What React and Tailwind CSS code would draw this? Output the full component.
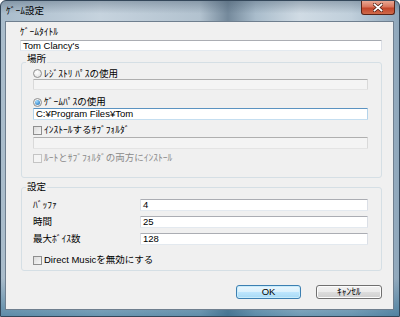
import React from 'react'

const font = "font-[family-name:'Liberation_Sans','Noto_Sans_CJK_JP',sans-serif]"

function TextBox({ value, w = 'w-full', h = 'h-[12px]', disabled, hot }) {
  const border = hot
    ? 'border-t-[#5b93c1] border-x-[#b4d3ea] border-b-[#c5def0]'
    : disabled
      ? 'border-t-[#afafaf] border-x-[#d9d9d9] border-b-[#e4e4e4]'
      : 'border-t-[#abadb3] border-x-[#dbdfe6] border-b-[#e3e9ef]'
  return (
    <div className={`${w} ${h} flex items-center border rounded-[1px] ${border} ${disabled ? 'bg-[#f4f4f4]' : 'bg-white'} pl-[2px] text-[9.5px] leading-none text-black`}>
      {value}
    </div>
  )
}

function Radio({ checked, label }) {
  return (
    <div className="flex items-center h-[12px] gap-[2px]">
      <div className="w-[9px] h-[9px] rounded-full border border-[#8f8f8f] bg-[radial-gradient(circle_at_40%_35%,#ffffff,#dcdcdc)] flex items-center justify-center">
        {checked && <div className="w-[5px] h-[5px] rounded-full bg-[radial-gradient(circle_at_35%_30%,#9fd9ff,#1a6fb8)]" />}
      </div>
      <span>{label}</span>
    </div>
  )
}

function Check({ label, disabled }) {
  return (
    <div className={`flex items-center h-[12px] gap-[2px] ${disabled ? 'text-[#8a8a8a]' : ''}`}>
      <div className={`w-[9px] h-[9px] border ${disabled ? 'border-[#c4c4c4] bg-[#f4f4f4]' : 'border-[#8f8f8f] bg-[linear-gradient(135deg,#dcdcdc,#f6f6f6)]'}`} />
      <span>{label}</span>
    </div>
  )
}

function Group({ title, top, className, children }) {
  return (
    <div className={`relative ml-[1px] border border-[#d5dfe5] rounded-[3px] ${className}`}>
      <span className={`absolute ${top} left-[4px] px-[1px] bg-[#f0f0f0] leading-[12px]`}>{title}</span>
      {children}
    </div>
  )
}

export default function App() {
  return (
    <div className={`w-[400px] h-[317px] ${font} text-[9.5px] leading-[12px] text-black`}>
      <div className="w-[400px] h-[317px] flex flex-col border border-[#34475a] rounded-t-[6px] overflow-hidden bg-[linear-gradient(180deg,rgba(60,80,100,0.35)_0%,transparent_4%,transparent_88%,rgba(30,100,140,0.55)_100%),linear-gradient(90deg,#a9bccb_0%,#c6d3de_25%,#b2c2cf_50%,#74899b_57%,#a9bccb_64%,#d0dbe4_75%,#c0cfdb_88%,#8fa7bb_100%)]">
        {/* title bar */}
        <div className="h-[20px] flex items-start">
          <span className="pl-[5px] pt-[4px] text-[9.5px] leading-[12px] text-black">ｹﾞｰﾑ設定</span>
          <div className="ml-auto mr-[4px] w-[34px] h-[14px] rounded-b-[3px] border border-t-0 border-[#5a2418] bg-[linear-gradient(180deg,#e9a894_0%,#d9755c_45%,#c2452a_55%,#cf6a4a_100%)] flex items-center justify-center">
            <svg width="10" height="9" viewBox="0 0 10 9">
              <path d="M1.5 1.5 L8.5 7.5 M8.5 1.5 L1.5 7.5" stroke="#4a1a10" strokeWidth="3.2" strokeLinecap="square" />
              <path d="M1.5 1.5 L8.5 7.5 M8.5 1.5 L1.5 7.5" stroke="#ffffff" strokeWidth="1.8" strokeLinecap="square" />
            </svg>
          </div>
        </div>

        {/* client area */}
        <div className="flex-1 ml-[4px] mr-[5px] mb-[6px] border border-[#6f7f8f] bg-[#f0f0f0] pl-[14px] pr-[11px] pt-[4px] flex flex-col">
          <div>ｹﾞｰﾑﾀｲﾄﾙ</div>
          <div className="mt-[2px]">
            <TextBox value="Tom Clancy's" h="h-[11px]" />
          </div>

          <Group title="場所" top="-top-[10px]" className="mt-[11px] pl-[11px] pr-[13px] pt-[5px] pb-[13px]">
            <div className="h-[11px] flex items-center">
              <Radio label="ﾚｼﾞｽﾄﾘ ﾊﾟｽの使用" />
            </div>
            <TextBox h="h-[11px]" disabled />
            <div className="mt-[6px]">
              <Radio checked label="ｹﾞｰﾑﾊﾟｽの使用" />
            </div>
            <TextBox value="C:¥Program Files¥Tom" hot />
            <div className="mt-[4px]">
              <Check label="ｲﾝｽﾄｰﾙするｻﾌﾞﾌｫﾙﾀﾞ" />
            </div>
            <div className="mt-[1px]">
              <TextBox disabled />
            </div>
            <div className="mt-[3px]">
              <Check disabled label="ﾙｰﾄとｻﾌﾞﾌｫﾙﾀﾞの両方にｲﾝｽﾄｰﾙ" />
            </div>
          </Group>

          <Group title="設定" top="-top-[7px]" className="mt-[9px] pl-[11px] pr-[13px] pt-[11px] pb-[4px]">
            <div className="flex flex-col gap-[5px]">
              {[
                ['ﾊﾞｯﾌｧ', '4'],
                ['時間', '25'],
                ['最大ﾎﾞｲｽ数', '128'],
              ].map(([k, v]) => (
                <div key={k} className="flex items-center">
                  <span className="w-[107px]">{k}</span>
                  <TextBox value={v} w="flex-1" />
                </div>
              ))}
            </div>
            <div className="mt-[9px]">
              <Check label="Direct Musicを無効にする" />
            </div>
          </Group>

          <div className="mt-[14px] flex justify-end gap-[15px]">
            <button className="w-[65px] h-[14px] rounded-[3px] border border-[#3c7fb1] bg-[linear-gradient(180deg,#eaf6fd_0%,#d9f0fc_50%,#bee6fd_50%,#a7d9f5_100%)] shadow-[inset_0_0_0_1px_#c9ecfb] text-[9.5px] leading-none">
              OK
            </button>
            <button className="w-[66px] h-[14px] rounded-[3px] border border-[#707070] bg-[linear-gradient(180deg,#f2f2f2_0%,#ebebeb_50%,#dddddd_50%,#cfcfcf_100%)] shadow-[inset_0_0_0_1px_#fcfcfc] text-[9.5px] leading-none">
              ｷｬﾝｾﾙ
            </button>
          </div>
        </div>
      </div>
    </div>
  )
}
